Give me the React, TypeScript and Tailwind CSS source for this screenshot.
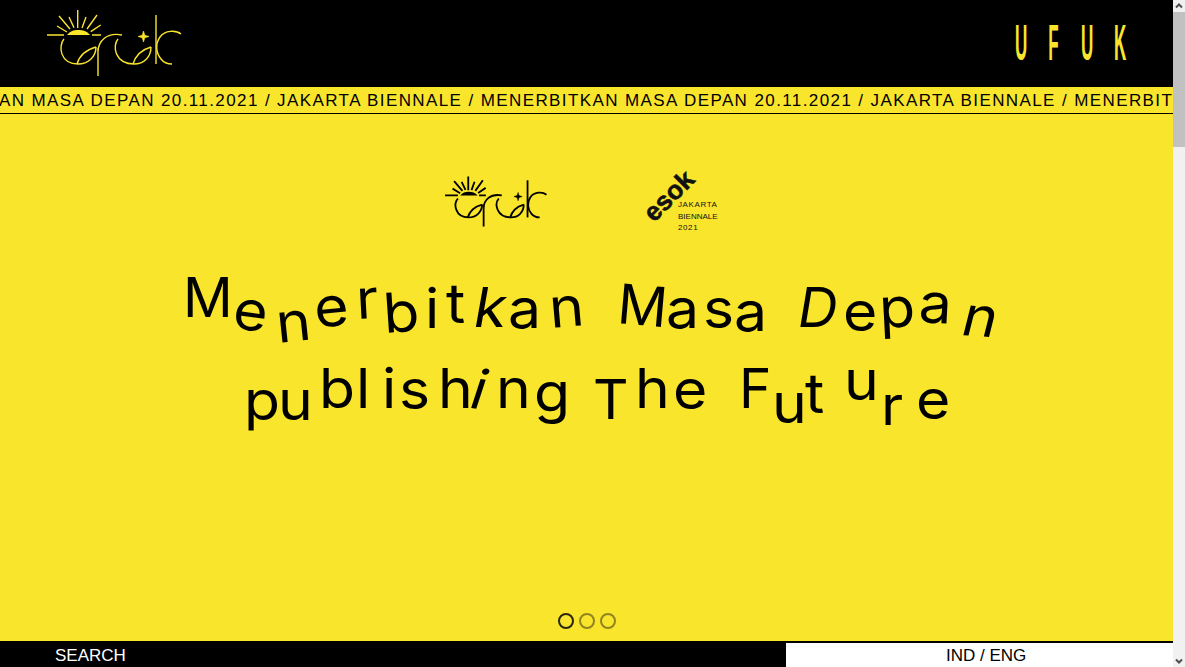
import clsx from "clsx";

type Letter = [string, string];

// Each letter of the headline wobbles on its own, so every one carries its pitch and offset.
const lineOne: Letter[] = [
  ["M", "w-[51px] translate-y-[-11px]"],
  ["e", "w-[42px] rotate-[8deg]"],
  ["n", "w-[38px] translate-y-[15px] rotate-[-6deg]"],
  ["e", "w-[42px] rotate-[-6deg]"],
  ["r", "w-[27px] translate-y-[-9px] rotate-[-3deg]"],
  ["b", "w-[42px] translate-y-[5px] rotate-[-4deg]"],
  ["i", "w-[21px]"],
  ["t", "w-[28px] translate-y-[-5px]"],
  ["k", "w-[34px] translate-y-[-1px] italic"],
  ["a", "w-[41px]"],
  ["n", "w-[69px] rotate-[-5deg]"],
  ["M", "w-[48px] translate-y-[-5px] rotate-[5deg]"],
  ["a", "w-[37px]"],
  ["s", "w-[31px]"],
  ["a", "w-[64px] translate-y-[3px]"],
  ["D", "w-[45px] translate-y-[-1px] italic"],
  ["e", "w-[36px] translate-y-[3px]"],
  ["p", "w-[40px] rotate-[-3deg]"],
  ["a", "w-[44px] translate-y-[-6px] rotate-[3deg]"],
  ["n", "w-[30px] translate-y-[7px] rotate-[4deg] italic"],
];

const lineTwo: Letter[] = [
  ["p", "w-[34px] translate-y-[12px]"],
  ["u", "w-[41px] translate-y-[12px]"],
  ["b", "w-[37px]"],
  ["l", "w-[26px]"],
  ["i", "w-[17px]"],
  ["s", "w-[39px] translate-y-[1px]"],
  ["h", "w-[34px]"],
  ["i", "w-[24px] italic rotate-[8deg]"],
  ["n", "w-[38px]"],
  ["g", "w-[59px] translate-y-[4px]"],
  ["T", "w-[42px] translate-y-[11px]"],
  ["h", "w-[38px]"],
  ["e", "w-[66px] translate-y-[1px]"],
  ["F", "w-[33px]"],
  ["u", "w-[33px] translate-y-[15px]"],
  ["t", "w-[39px] translate-y-[5px]"],
  ["u", "w-[37px] translate-y-[-8px]"],
  ["r", "w-[35px] translate-y-[17px]"],
  ["e", "w-[28px] translate-y-[11px]"],
];

function UfukLogo(props: { className: string; stroke: number }) {
  return (
    <svg viewBox="47 8 136 70" fill="none" stroke="currentColor" strokeWidth={props.stroke} className={props.className}>
      <path d="M47 35H64M92 35H101" />
      <path d="M67 35C70 31 74 30 78 30C83 30 87 31 90 35Z" fill="currentColor" stroke="none" />
      <path d="M77.7 10V28M69 17L74 27.7M59 16L70 29M57 26L67 32M97 15L87 29M86 17L82 28M100.7 25L90.7 31.7" />
      <path d="M64 39C58 46 60 64 78 64C88 64 96 57 96 47" />
      <path d="M77 64Q81 51 96 47" />
      <path d="M98 48V76M98 52C98 41 107 32 122 35" />
      <path d="M118 39C112 46 115 64 134 64C144 64 151 57 151 47" />
      <path d="M133 64Q137 51 151 47" />
      <path d="M156 15V64" />
      <path d="M181 34C176 30 165 30 160 37C155 44 156 53 161 59C164 63 168 64 172 64" />
      <path
        d="M143.5 31L144.8 35.2L149 36.5L144.8 37.8L143.5 42L142.2 37.8L138 36.5L142.2 35.2Z"
        fill="currentColor"
        stroke="currentColor"
        strokeWidth="0.6"
      />
    </svg>
  );
}

function EsokLogo() {
  return (
    <svg viewBox="640 166 80 66" className="h-[66px] w-[80px]" fill="#111111">
      <text
        x="654"
        y="223"
        transform="rotate(-45 654 223)"
        fontFamily="'Liberation Sans', sans-serif"
        fontWeight="700"
        fontSize="26"
        stroke="#111111"
        strokeWidth="0.6"
      >
        esok
      </text>
      <g fontFamily="'Liberation Sans', sans-serif" fontSize="8">
        <text x="678" y="207" letterSpacing="0.6">JAKARTA</text>
        <text x="678" y="219">BIENNALE</text>
        <text x="678" y="230" letterSpacing="0.6">2021</text>
      </g>
    </svg>
  );
}

function WobblyLine(props: { letters: Letter[]; className: string }) {
  return (
    <div className={clsx("flex h-[80px] leading-[80px]", props.className)}>
      {props.letters.map(([char, cls], i) => (
        <span
          key={i}
          className={clsx("block shrink-0 origin-left", char === char.toLowerCase() && "scale-x-[1.07]", cls)}
        >
          {char}
        </span>
      ))}
    </div>
  );
}

function Chevron(props: { d: string }) {
  return (
    <svg viewBox="0 0 12 12" className="h-3 w-3" fill="none" stroke="#505050" strokeWidth="2">
      <path d={props.d} />
    </svg>
  );
}

export default function App() {
  return (
    <div className="flex h-screen overflow-hidden font-['Liberation_Sans',sans-serif]">
      <div className="flex min-w-0 flex-1 flex-col bg-[#fae52d]">
        <header className="flex h-[87px] shrink-0 items-start justify-between bg-black text-[#fae52d]">
          <UfukLogo className="ml-[47px] mt-[8px] h-[70px] w-[136px]" stroke={1.4} />
          <div className="mr-[37px] mt-[13px] flex h-[60px] text-[50px] font-bold leading-[60px]">
            <span className="w-[33px] scale-x-[0.34] text-center">U</span>
            <span className="w-[33px] scale-x-[0.34] text-center">F</span>
            <span className="w-[33px] scale-x-[0.34] text-center">U</span>
            <span className="w-[33px] scale-x-[0.34] text-center">K</span>
          </div>
        </header>

        <div className="h-[27px] shrink-0 overflow-hidden whitespace-nowrap border-b border-black text-[17px] leading-[27px] tracking-[1.4px] text-black">
          <span className="-ml-px block">
            AN MASA DEPAN 20.11.2021 / JAKARTA BIENNALE / MENERBITKAN MASA DEPAN 20.11.2021 / JAKARTA BIENNALE / MENERBIT
          </span>
        </div>

        <main className="flex min-h-0 flex-1 flex-col">
          <div className="flex shrink-0 items-start justify-center gap-[92px] pr-[8px] pt-[52px]">
            <UfukLogo className="mt-[9px] h-[53px] w-[103px] text-black" stroke={2.4} />
            <EsokLogo />
          </div>

          <h1 className="mt-[36px] font-['Inter',sans-serif] text-[55px] font-normal text-black">
            <WobblyLine letters={lineOne} className="pl-[183px]" />
            <WobblyLine letters={lineTwo} className="pl-[244px]" />
          </h1>

          <div className="mt-auto flex justify-center gap-[5px] pb-[12px]">
            <span className="h-4 w-4 rounded-full border-2 border-[#2a2610]" />
            <span className="h-4 w-4 rounded-full border-2 border-[#8f8420]" />
            <span className="h-4 w-4 rounded-full border-2 border-[#8f8420]" />
          </div>
        </main>

        <footer className="flex h-[26px] shrink-0 border-t-2 border-black text-[17px] leading-[26px]">
          <div className="w-[786px] bg-black pl-[55px] text-white">SEARCH</div>
          <div className="flex-1 bg-white pl-[160px] text-black">IND / ENG</div>
        </footer>
      </div>

      <div className="flex w-3 shrink-0 flex-col bg-[#f1f1f1]">
        <Chevron d="M3 7.5L6 4.5L9 7.5" />
        <div className="h-[135px] bg-[#c1c1c1]" />
        <div className="flex-1" />
        <Chevron d="M3 4.5L6 7.5L9 4.5" />
      </div>
    </div>
  );
}
